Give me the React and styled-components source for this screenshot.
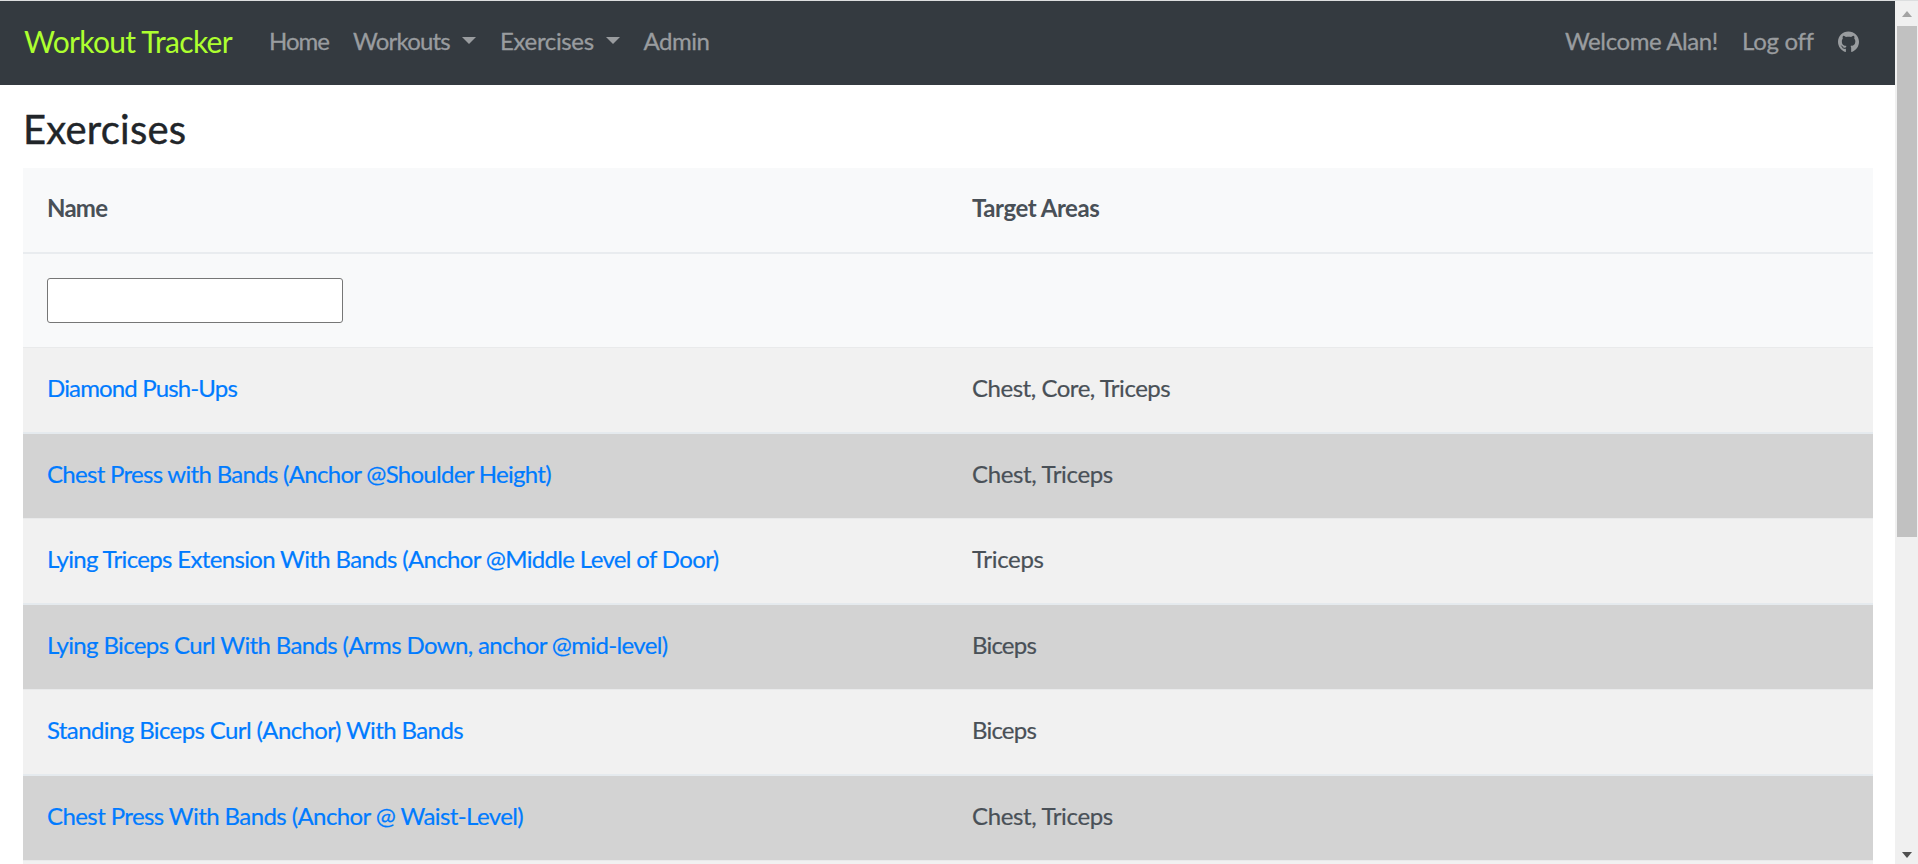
import React from 'react';
import styled, { createGlobalStyle } from 'styled-components';
import { FaGithub } from 'react-icons/fa';

const GlobalStyle = createGlobalStyle`
  * { box-sizing: border-box; }
  html, body { margin: 0; height: 100%; overflow: hidden; background: #fff; }
  body { font: 24px/36px Lato, "Liberation Sans", sans-serif; color: #212529; }
`;

const Window = styled.div`
  display: flex;
  height: 864px;
  border-top: 1px solid #dcdedf;
  overflow: hidden;
`;

const Page = styled.main`
  flex: 1;
  min-width: 0;
  overflow: hidden;
`;

const Navbar = styled.nav`
  display: flex;
  align-items: center;
  height: 84px;
  padding: 0 24px 4px;
  background: #343a40;
`;

const Label = styled.span`
  white-space: nowrap;
  letter-spacing: ${(p) => p.$tracking || 0}px;
`;

const Brand = styled.a`
  width: 209px;
  margin-right: 24px;
  font-size: 30px;
  color: #adff2f;
`;

const NavGroup = styled.div`
  display: flex;
  margin-left: ${(p) => (p.$end ? 'auto' : '0')};
`;

const NavLink = styled.a`
  display: flex;
  align-items: center;
  padding: 0 12px;
  color: #999c9f;
  -webkit-text-stroke: 0.3px currentColor;
`;

const NavText = styled(Label)`
  width: ${(p) => p.$width}px;
`;

const Caret = styled.i`
  margin: 0 0 1px 12px;
  border: 7px solid transparent;
  border-top-color: currentColor;
  border-bottom: 0;
`;

const GithubIcon = styled(FaGithub)`
  width: 21px;
  height: 22px;
  margin-top: 1px;
`;

const Content = styled.section`
  padding: 0 22px 0 23px;
`;

const Title = styled.h2`
  margin: 20px 0 15px;
  font-size: 40px;
  font-weight: 400;
  line-height: 48px;
  -webkit-text-stroke: 0.4px currentColor;
`;

const Grid = styled.div`
  color: #495057;
`;

const Row = styled.div`
  display: grid;
  grid-template-columns: 1fr 1fr;
`;

const HeadRow = styled(Row)`
  height: 86px;
  padding-top: 22px;
  background: #f8f9fa;
  border-bottom: 2px solid #e9ecef;
  font-weight: 700;
`;

const FilterRow = styled(Row)`
  height: 93px;
  padding-top: 24px;
  background: #f8f9fa;
`;

const BodyRow = styled(Row)`
  padding: 22px 0 26px;
  box-sizing: content-box;
  height: 36px;
  background: #d3d3d3;
  -webkit-text-stroke: 0.2px currentColor;

  &:nth-child(odd) {
    background: #f1f1f1;
    border-top: 1px solid #e9eaeb;
    border-bottom: 2px solid #e5eaee;
  }
`;

const Cell = styled.div`
  padding-left: 24px;
`;

const FilterInput = styled.input`
  display: block;
  width: 296px;
  height: 45px;
  border: 1px solid #767676;
  border-radius: 3px;
  background: #fff;
  font: inherit;
`;

const ExerciseLink = styled(Label)`
  color: #007bff;
`;

const Scrollbar = styled.aside`
  display: flex;
  flex-direction: column;
  align-items: center;
  width: 23px;
  padding: 10px 0 6px;
  background: #f0f0f0;
`;

const Thumb = styled.div`
  width: 20px;
  height: 511px;
  margin: 9px 0 auto 1px;
  background: #c1c1c1;
`;

const Arrow = styled.i`
  margin-left: 1px;
  border: 5px solid transparent;
  ${(p) => (p.$up
    ? 'border-bottom: 6px solid #a3a3a3; border-top: 0;'
    : 'border-top: 6px solid #505050; border-bottom: 0;')}
`;

const exercises = [
  { name: 'Diamond Push-Ups', nameTracking: -0.85, areas: 'Chest, Core, Triceps', areasTracking: -0.47 },
  { name: 'Chest Press with Bands (Anchor @Shoulder Height)', nameTracking: -0.7, areas: 'Chest, Triceps', areasTracking: -0.35 },
  { name: 'Lying Triceps Extension With Bands (Anchor @Middle Level of Door)', nameTracking: -0.655, areas: 'Triceps', areasTracking: -0.3 },
  { name: 'Lying Biceps Curl With Bands (Arms Down, anchor @mid-level)', nameTracking: -0.63, areas: 'Biceps', areasTracking: -0.8 },
  { name: 'Standing Biceps Curl (Anchor) With Bands', nameTracking: -0.61, areas: 'Biceps', areasTracking: -0.8 },
  { name: 'Chest Press With Bands (Anchor @ Waist-Level)', nameTracking: -0.59, areas: 'Chest, Triceps', areasTracking: -0.35 },
  { name: '', areas: '' },
];

export default function App() {
  return (
    <>
      <GlobalStyle />
      <Window>
        <Page>
          <Navbar>
            <Brand><Label $tracking={-0.7}>Workout Tracker</Label></Brand>
            <NavGroup>
              <NavLink><NavText $width={60} $tracking={-1}>Home</NavText></NavLink>
              <NavLink><NavText $width={97} $tracking={-0.8}>Workouts</NavText><Caret /></NavLink>
              <NavLink><NavText $width={93.5} $tracking={-0.35}>Exercises</NavText><Caret /></NavLink>
              <NavLink><NavText $width={66} $tracking={-0.5}>Admin</NavText></NavLink>
            </NavGroup>
            <NavGroup $end>
              <NavLink><NavText $width={153} $tracking={-0.4}>Welcome Alan!</NavText></NavLink>
              <NavLink><NavText $width={72} $tracking={-0.3}>Log off</NavText></NavLink>
              <NavLink><GithubIcon /></NavLink>
            </NavGroup>
          </Navbar>
          <Content>
            <Title><Label $tracking={0.2}>Exercises</Label></Title>
            <Grid>
              <HeadRow>
                <Cell><Label $tracking={-0.75}>Name</Label></Cell>
                <Cell><Label $tracking={-0.45}>Target Areas</Label></Cell>
              </HeadRow>
              <FilterRow>
                <Cell><FilterInput /></Cell>
              </FilterRow>
              <div>
                {exercises.map((e, i) => (
                  <BodyRow key={i}>
                    <Cell><ExerciseLink $tracking={e.nameTracking}>{e.name}</ExerciseLink></Cell>
                    <Cell><Label $tracking={e.areasTracking}>{e.areas}</Label></Cell>
                  </BodyRow>
                ))}
              </div>
            </Grid>
          </Content>
        </Page>
        <Scrollbar>
          <Arrow $up />
          <Thumb />
          <Arrow />
        </Scrollbar>
      </Window>
    </>
  );
}
